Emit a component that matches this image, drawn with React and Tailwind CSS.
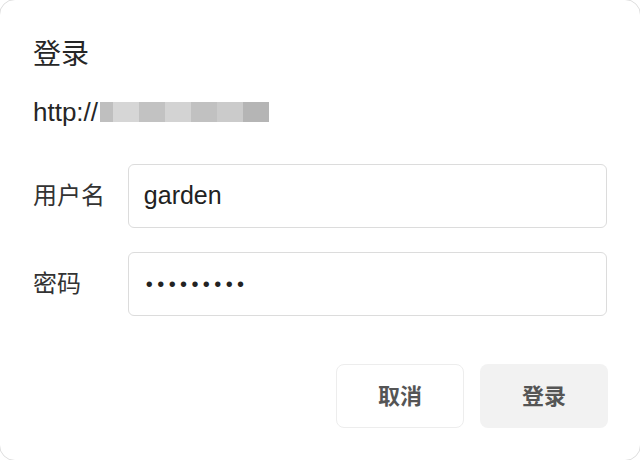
export default function App() {
  const blocks = [
    ["13px", "#bfbfbf"],
    ["26px", "#d6d6d6"],
    ["26px", "#c2c2c2"],
    ["26px", "#d3d3d3"],
    ["26px", "#c1c1c1"],
    ["26px", "#cbcbcb"],
    ["26px", "#b5b5b5"],
  ];
  return (
    <div
      className="w-[640px] h-[460px] bg-white overflow-hidden"
      style={{ fontFamily: '"Liberation Sans", "Noto Sans CJK SC", sans-serif' }}
    >
      <div className="w-[642px] h-[462px] -m-px bg-white rounded-[16px] border border-[#dedede] flex flex-col px-[33px]">
        <div className="mt-[36px] h-[38px] leading-[38px] text-[28px] text-[#262626]">登录</div>
        <div className="mt-[24px] h-[28px] flex items-center text-[26px] text-[#262626]">
          <span>http://</span>
          <span className="flex h-[20px] ml-[2px]">
            {blocks.map(([w, c], i) => (
              <span key={i} className="h-[20px]" style={{ width: w, backgroundColor: c }} />
            ))}
          </span>
        </div>
        <div className="mt-[38px] flex flex-col gap-[24px]">
          <div className="flex items-center">
            <div className="w-[95px] text-[24px] text-[#333333]">用户名</div>
            <div className="w-[480px] h-[64px] border border-[#dcdcdc] rounded-[6px] flex items-center px-[15px] text-[25px] text-[#222222]">
              garden
            </div>
          </div>
          <div className="flex items-center">
            <div className="w-[95px] text-[24px] text-[#333333]">密码</div>
            <div className="w-[480px] h-[64px] border border-[#dcdcdc] rounded-[6px] flex items-center px-[17px] text-[20px] tracking-[4.4px] text-[#222222]">
              •••••••••
            </div>
          </div>
        </div>
        <div className="mt-[48px] flex justify-end gap-[16px] w-[575px]">
          <button className="w-[128px] h-[64px] rounded-[8px] border border-[#ededed] bg-white text-[22px] font-semibold text-[#555555]">
            取消
          </button>
          <button className="w-[128px] h-[64px] rounded-[8px] bg-[#f2f2f2] text-[22px] font-semibold text-[#555555]">
            登录
          </button>
        </div>
      </div>
    </div>
  );
}
